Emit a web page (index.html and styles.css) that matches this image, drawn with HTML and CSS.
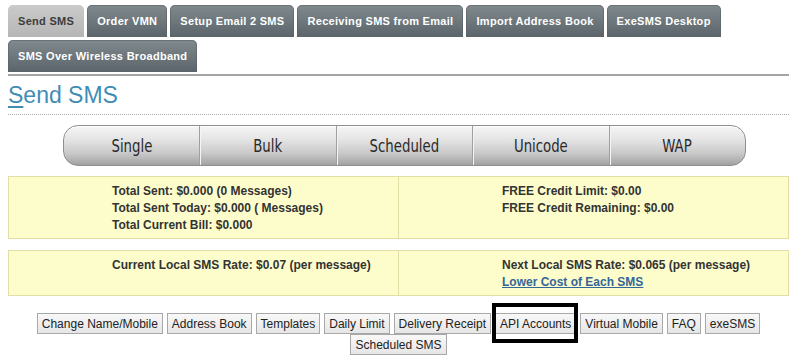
FILE: index.html
```html
<!DOCTYPE html>
<html lang="en">

<head>
    <meta charset="UTF-8">
    <title>Send SMS</title>
    <link rel="stylesheet" href="styles.css">
</head>

<body>
    <div class="page">
        <!-- main navigation tabs -->
        <ul class="tabs">
            <li class="tab active">Send SMS</li>
            <li class="tab">Order VMN</li>
            <li class="tab">Setup Email 2 SMS</li>
            <li class="tab">Receiving SMS from Email</li>
            <li class="tab">Import Address Book</li>
            <li class="tab">ExeSMS Desktop</li>
            <li class="tab">SMS Over Wireless Broadband</li>
        </ul>

        <h1 class="page-title"><u>S</u>end SMS</h1>

        <!-- sms type selector -->
        <div class="pill-bar">
            <a class="pill"><span>Single</span></a>
            <a class="pill"><span>Bulk</span></a>
            <a class="pill"><span>Scheduled</span></a>
            <a class="pill"><span>Unicode</span></a>
            <a class="pill"><span>WAP</span></a>
        </div>

        <div class="info-box">
            <div class="info-cell">
                Total Sent: $0.000 (0 Messages)<br>
                Total Sent Today: $0.000 ( Messages)<br>
                Total Current Bill: $0.000
            </div>
            <div class="info-cell">
                FREE Credit Limit: $0.00<br>
                FREE Credit Remaining: $0.00
            </div>
        </div>

        <div class="info-box">
            <div class="info-cell">
                Current Local SMS Rate: $0.07 (per message)
            </div>
            <div class="info-cell">
                Next Local SMS Rate: $0.065 (per message)<br>
                <a href="#" class="info-link">Lower Cost of Each SMS</a>
            </div>
        </div>

        <div class="actions">
            <button class="btn">Change Name/Mobile</button>
            <button class="btn">Address Book</button>
            <button class="btn">Templates</button>
            <button class="btn">Daily Limit</button>
            <button class="btn">Delivery Receipt</button>
            <button class="btn marked">API Accounts</button>
            <button class="btn">Virtual Mobile</button>
            <button class="btn">FAQ</button>
            <button class="btn">exeSMS</button>
            <button class="btn">Scheduled SMS</button>
        </div>
    </div>
</body>

</html>
```

FILE: styles.css
```css
* {
    margin: 0;
    padding: 0;
    box-sizing: border-box;
}

body {
    margin: 0 8px;
    background: #ffffff;
    font-family: 'Liberation Sans', Arial, sans-serif;
    color: #333333;
}

.page {
    width: 781px;
    padding-top: 5px;
}

/* tabs */

.tabs {
    list-style: none;
    display: flex;
    flex-wrap: wrap;
    gap: 3px 3px;
    border-bottom: 2px solid #a4a4a4;
    padding-bottom: 2px;
}

.tab {
    height: 32px;
    line-height: 33px;
    padding: 0 10px;
    font-size: 11px;
    letter-spacing: 0.3px;
    font-weight: bold;
    color: #ffffff;
    background: linear-gradient(#808a8e, #5a646a);
    border-radius: 5px 5px 0 0;
    box-shadow: inset 0 0 0 1px rgba(90, 100, 104, 0.6);
    white-space: nowrap;
}

.tab.active {
    color: #3c3c3c;
    background: linear-gradient(#cacaca, #b6b6b6);
    box-shadow: none;
}

/* title */

.page-title {
    font-size: 23px;
    font-weight: normal;
    color: #3f8db5;
    line-height: 26px;
    padding: 6px 0 6px;
    border-bottom: 1px dotted #aaaaaa;
}

.page-title u {
    text-decoration-thickness: 2px;
    text-underline-offset: 3px;
}

/* sms type pills */

.pill-bar {
    display: flex;
    width: 683px;
    height: 41px;
    margin: 10px 0 10px 55px;
    border: 1px solid #8e8e8e;
    border-radius: 15px;
    overflow: hidden;
    background: linear-gradient(#f6f6f6 0%, #e4e4e4 35%, #c9c9c9 70%, #a2a2a2 100%);
    box-shadow: inset 0 1px 0 #ffffff;
}

.pill {
    flex: 1;
    display: flex;
    justify-content: center;
    align-items: center;
    font-family: 'DejaVu Sans Condensed', 'DejaVu Sans', sans-serif;
    font-stretch: condensed;
    font-size: 18px;
    color: #2a2a2a;
    border-left: 1px solid #a0a0a0;
    box-shadow: inset 1px 0 0 #f4f4f4;
}

.pill span {
    display: inline-block;
    transform: scaleX(0.82);
}

.pill:first-child {
    border-left: none;
    box-shadow: none;
}

/* yellow info boxes */

.info-box {
    display: grid;
    grid-template-columns: 390px 1fr;
    background: #fdfdcc;
    border: 1px solid #e2dea6;
    margin-bottom: 11px;
}

.info-cell {
    padding: 6px 0 4px 103px;
    font-size: 12px;
    font-weight: bold;
    line-height: 17px;
    color: #333333;
}

.info-cell:first-child {
    border-right: 1px solid #e2dea6;
}

.info-link {
    color: #336699;
}

/* bottom buttons */

.actions {
    display: flex;
    flex-wrap: wrap;
    justify-content: center;
    gap: 0 4px;
    margin-top: 17px;
}

.btn {
    position: relative;
    height: 21px;
    padding: 0 4px;
    font-family: 'Liberation Sans', Arial, sans-serif;
    font-size: 12px;
    color: #222222;
    background: linear-gradient(#f8f8f8, #e6e6e6);
    border: 1px solid #a8a8a8;
    border-radius: 0;
    cursor: pointer;
}

.btn.marked::after {
    content: '';
    position: absolute;
    top: -11px;
    right: -3px;
    bottom: -10px;
    left: -4px;
    border: 4px solid #000000;
}
```
